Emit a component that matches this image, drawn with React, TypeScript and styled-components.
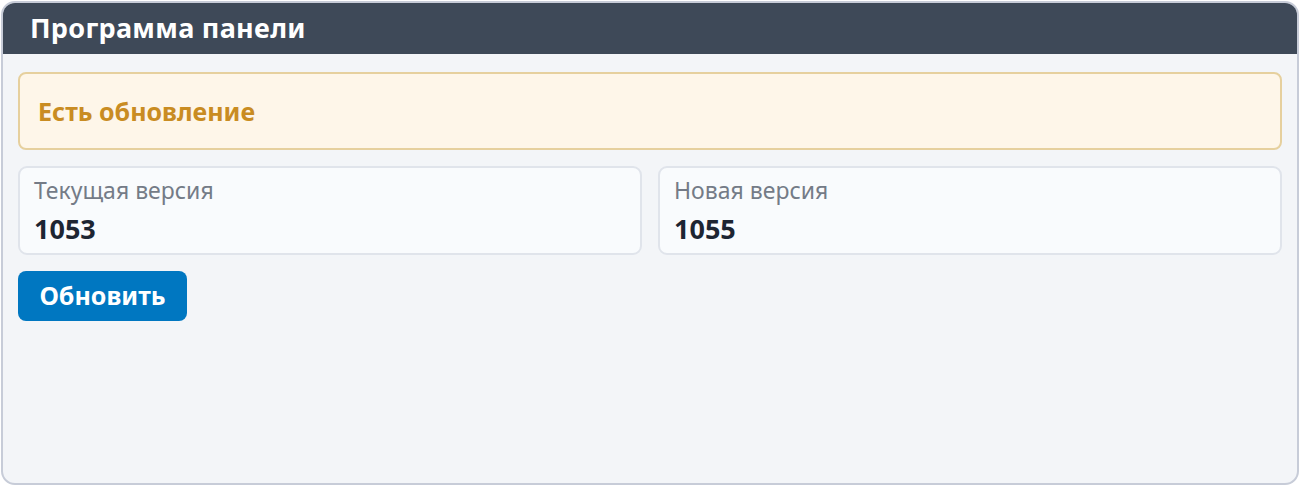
import React from "react";
import styled, { createGlobalStyle } from "styled-components";

const GlobalStyle = createGlobalStyle`
  html, body {
    margin: 0;
    padding: 0;
    background: #ffffff;
  }
  body {
    font-family: "Noto Sans", "Open Sans", sans-serif;
  }
  * {
    box-sizing: border-box;
  }
`;

const Page = styled.div`
  padding: 1px;
  height: 486px;
`;

const Panel = styled.section`
  height: 100%;
  border: 2px solid #c7ccd8;
  border-radius: 14px;
  background: #f3f5f8;
  overflow: hidden;
  display: flex;
  flex-direction: column;
`;

const PanelHeader = styled.header`
  background: #3e4958;
  height: 51px;
  display: flex;
  align-items: center;
  padding: 0 27px 2px;
`;

const PanelTitle = styled.h2`
  margin: 0;
  color: #ffffff;
  font-size: 27px;
  font-weight: 700;
  letter-spacing: 0.3px;
`;

const PanelBody = styled.div`
  padding: 18px 15px;
  display: flex;
  flex-direction: column;
  gap: 16px;
`;

const Alert = styled.div`
  height: 78px;
  background: #fef6e9;
  border: 2px solid #e6d09e;
  border-radius: 8px;
  display: flex;
  align-items: center;
  padding: 0 18px;
`;

const AlertText = styled.h3`
  margin: 0;
  color: #c98c22;
  font-size: 25px;
  font-weight: 700;
`;

const VersionRow = styled.div`
  display: grid;
  grid-template-columns: 1fr 1fr;
  gap: 16px;
`;

const VersionCard = styled.div`
  height: 89px;
  background: #f9fbfd;
  border: 2px solid #e0e4eb;
  border-radius: 9px;
  padding: 7px 14px 0;
  display: flex;
  flex-direction: column;
  gap: 8px;
`;

const VersionLabel = styled.span`
  color: #747b87;
  font-size: 23px;
  line-height: 30px;
`;

const VersionValue = styled.span`
  color: #1d2532;
  font-size: 27px;
  font-weight: 700;
  line-height: 32px;
`;

const UpdateButton = styled.button`
  align-self: flex-start;
  width: 169px;
  height: 50px;
  border: none;
  border-radius: 8px;
  background: #0077c1;
  color: #ffffff;
  font-family: inherit;
  font-size: 25px;
  font-weight: 700;
  padding: 0 0 2px;
  cursor: pointer;
`;

const versions = [
  { label: "Текущая версия", value: "1053" },
  { label: "Новая версия", value: "1055" },
];

const App: React.FC = () => {
  return (
    <Page>
      <GlobalStyle />
      <Panel>
        <PanelHeader>
          <PanelTitle>Программа панели</PanelTitle>
        </PanelHeader>
        <PanelBody>
          <Alert>
            <AlertText>Есть обновление</AlertText>
          </Alert>
          <VersionRow>
            {versions.map((item) => (
              <VersionCard key={item.label}>
                <VersionLabel>{item.label}</VersionLabel>
                <VersionValue>{item.value}</VersionValue>
              </VersionCard>
            ))}
          </VersionRow>
          <UpdateButton>Обновить</UpdateButton>
        </PanelBody>
      </Panel>
    </Page>
  );
};

export default App;
